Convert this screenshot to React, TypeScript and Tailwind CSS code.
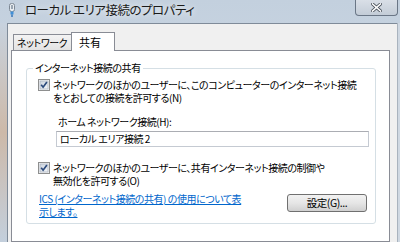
import React from 'react';

const jp = "font-['Noto_Sans_CJK_JP','Noto_Sans',sans-serif] [font-feature-settings:'palt']";

// タイトルバーのネットワークアイコン
function PlugIcon() {
  return (
    <svg width="8" height="14" viewBox="0 0 8 14">
      <rect x="1.5" y="0.5" width="5" height="8" rx="2" fill="#e8ecf0" stroke="#7d8894" />
      <rect x="3" y="2" width="2" height="4" fill="#9aa6b2" />
      <rect x="2.5" y="8.5" width="3" height="3" fill="#3f8fd8" />
      <rect x="3.3" y="11.5" width="1.4" height="2.5" fill="#2a6fb8" />
    </svg>
  );
}

function CheckBox() {
  return (
    <svg width="12" height="12" viewBox="0 0 12 12" className="shrink-0">
      <defs>
        <linearGradient id="cbg" x1="0" y1="0" x2="1" y2="1">
          <stop offset="0" stopColor="#cbd3de" />
          <stop offset="1" stopColor="#f4f6f9" />
        </linearGradient>
      </defs>
      <rect x="0.5" y="0.5" width="11" height="11" fill="#f6f6f6" stroke="#8e8f8f" />
      <rect x="2" y="2" width="8" height="8" fill="url(#cbg)" stroke="#aeb6c2" strokeWidth="0.8" />
      <path d="M3.2 5.8 L5.1 8.2 L8.9 2.9" fill="none" stroke="#2c4a7c" strokeWidth="1.7" />
    </svg>
  );
}

export default function App() {
  return (
    <div className={`w-[400px] h-[242px] overflow-hidden flex flex-col bg-gradient-to-b from-[#c3d0de] to-[#d6dfe9] text-black ${jp}`}>
      {/* タイトルバー */}
      <div className="h-[23px] shrink-0 flex items-start">
        <div className="ml-[8px] mt-[3px]">
          <PlugIcon />
        </div>
        <span className="ml-[9px] mt-[1px] text-[12.5px] tracking-[-0.5px] leading-[18px] text-[#1a1a1a] whitespace-nowrap [text-shadow:0_0_6px_#ffffff]">
          ローカル エリア接続のプロパティ
        </span>
        <div className="ml-auto mr-[2px] w-[43px] h-[16px] flex items-center justify-center rounded-b-[4px] border border-t-0 border-[#6a7686] bg-gradient-to-b from-[#d9dfe7] to-[#c3ccd7]">
          <svg width="11" height="9" viewBox="0 0 11 9">
            <path d="M1.5 1 L9.5 8 M9.5 1 L1.5 8" stroke="#4a525c" strokeWidth="3.2" strokeLinecap="square" />
            <path d="M1.5 1 L9.5 8 M9.5 1 L1.5 8" stroke="#ffffff" strokeWidth="1.6" strokeLinecap="square" />
          </svg>
        </div>
      </div>

      <div className="flex-1 flex min-h-0">
        <div className="w-[7px] shrink-0 bg-gradient-to-b from-[#c7d2de] via-[#cdb9a8] to-[#c3cfdc]" />
        {/* クライアント領域 */}
        <div className="flex-1 flex flex-col border-l border-t border-[#7f8b99] bg-[#f0f0f0] pt-[8px] pl-[3px] pr-[7px]">
          {/* タブ */}
          <div className="relative z-10 flex items-end -mb-[1px] leading-[14px] whitespace-nowrap">
            <div className="ml-[2px] mb-[1px] w-[59px] h-[16px] border border-b-0 border-[#898c95] bg-gradient-to-b from-[#f3f3f3] to-[#e3e3e3] pl-[3px] pt-[1px] text-[10px] tracking-[-0.45px]">
              ネットワーク
            </div>
            <div className="-ml-[1px] w-[44px] h-[19px] border border-b-0 border-[#898c95] bg-white pl-[7px] pt-[2px] text-[11px]">
              共有
            </div>
          </div>
          {/* タブページ */}
          <div className="flex-1 border border-[#898c95] bg-white pt-[10px] pl-[14px]">
            <fieldset className="min-w-0 w-[350px] border border-[#d5dfe5] rounded-[3px] pl-[11px] pr-[8px] pb-[5px] text-[10px] tracking-[-0.45px]">
              <legend className="-ml-[5px] px-[2px] leading-[14px] bg-white whitespace-nowrap">インターネット接続の共有</legend>

              <div className="mt-[4px] flex items-start gap-[3px]">
                <CheckBox />
                <div className="-mt-[1px] leading-[13px] whitespace-nowrap">
                  ネットワークのほかのユーザーに、このコンピューターのインターネット接続
                  <br />
                  をとおしての接続を許可する(N)
                </div>
              </div>

              <div className="mt-[11px] pl-[20px] leading-[13px] whitespace-nowrap">ホーム ネットワーク接続(H):</div>
              <div className="mt-[3px] ml-[18px] w-[313px] h-[16px] border border-[#c5cad2] border-t-[#abadb3] pl-[3px] leading-[14px] whitespace-nowrap">
                ローカル エリア接続 2
              </div>

              <div className="mt-[15px] flex items-start gap-[3px]">
                <CheckBox />
                <div className="-mt-[1px] leading-[13px] whitespace-nowrap">
                  ネットワークのほかのユーザーに、共有インターネット接続の制御や
                  <br />
                  無効化を許可する(O)
                </div>
              </div>

              <div className="mt-[5px] flex items-start justify-between">
                <a className="ml-[1px] leading-[13px] text-[#0066cc] underline whitespace-nowrap cursor-pointer">
                  ICS (インターネット接続の共有) の使用について表
                  <br />
                  示します。
                </a>
                <button className="mt-[2px] w-[80px] h-[18px] rounded-[3px] border border-[#707070] bg-gradient-to-b from-[#f2f2f2] via-[#e6e6e6] to-[#d0d0d0] text-[10.5px] leading-[14px]">
                  設定(G)...
                </button>
              </div>
            </fieldset>
          </div>
        </div>
        <div className="w-[3px] shrink-0 border-l border-[#a9b3be] bg-[#cfd8e2]" />
      </div>
    </div>
  );
}
